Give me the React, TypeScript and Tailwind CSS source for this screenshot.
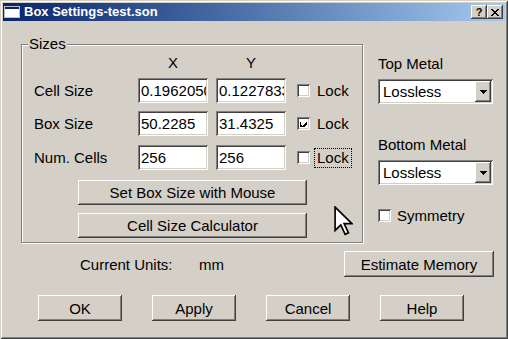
const raised =
  'bg-[#d4d0c8] shadow-[inset_-1px_-1px_#404040,inset_1px_1px_#ffffff,inset_-2px_-2px_#808080,inset_2px_2px_#d4d0c8]'
const sunken =
  'bg-white shadow-[inset_1px_1px_#808080,inset_-1px_-1px_#ffffff,inset_2px_2px_#404040,inset_-2px_-2px_#d4d0c8]'

function Button({ label, className }: { label: string; className: string }) {
  return (
    <div className={`${raised} ${className} flex items-center justify-center text-black`}>
      {label}
    </div>
  )
}

function Field({ value }: { value: string }) {
  return (
    <div className={`${sunken} w-[70px] h-[25px] flex items-center overflow-hidden whitespace-nowrap pl-[3px] pr-[2px]`}>
      <span className="block overflow-hidden">{value}</span>
    </div>
  )
}

function Checkbox({ checked = false }: { checked?: boolean }) {
  return (
    <div className={`${sunken} w-[13px] h-[13px] shrink-0 flex items-center justify-center`}>
      {checked && (
        <svg width="7" height="7" viewBox="0 0 7 7" shapeRendering="crispEdges">
          <path d="M0 2h1v3h1v1h1v-1h1v-1h1v-1h1v-1h1v3h-1v1h-1v1h-1v1h-1v1h-1v-1h-1v-1h-1z" fill="#000" />
        </svg>
      )}
    </div>
  )
}

function Row({
  label,
  x,
  y,
  checked,
  focused,
  className,
}: {
  label: string
  x: string
  y: string
  checked?: boolean
  focused?: boolean
  className: string
}) {
  return (
    <div className={`flex items-center h-[25px] ${className}`}>
      <div className="w-[104px]">{label}</div>
      <Field value={x} />
      <div className="ml-[8px]">
        <Field value={y} />
      </div>
      <div className="ml-[11px]">
        <Checkbox checked={checked} />
      </div>
      <div
        className={`ml-[4px] h-[20px] px-[2px] flex items-center border ${
          focused ? 'border-dotted border-black' : 'border-transparent'
        }`}
      >
        Lock
      </div>
    </div>
  )
}

function Select() {
  return (
    <div className={`${sunken} w-[115px] h-[25px] flex items-center`}>
      <span className="flex-1 pl-[5px]">Lossless</span>
      <div className={`${raised} w-[16px] h-[21px] mr-[2px] flex items-center justify-center`}>
        <svg width="7" height="4" viewBox="0 0 7 4" shapeRendering="crispEdges">
          <path d="M0 0h7v1h-1v1h-1v1h-1v1h-1v-1h-1v-1h-1v-1h-1z" fill="#000" />
        </svg>
      </div>
    </div>
  )
}

export default function App() {
  return (
    <div className="w-[508px] h-[339px] bg-[#d4d0c8] font-['Liberation_Sans',Arial,sans-serif] text-[15px] leading-[17px] text-black">
      <div className="relative w-[508px] h-[339px] p-[3px] shadow-[inset_1px_1px_#d4d0c8,inset_-1px_-1px_#404040,inset_2px_2px_#ffffff,inset_-2px_-2px_#808080]">
        {/* title bar */}
        <div className="h-[18px] flex items-center bg-linear-to-r from-[#0a246a] to-[#a6caf0]">
          <svg width="16" height="16" viewBox="0 0 16 16" className="ml-[1px]" shapeRendering="crispEdges">
            <rect x="0.5" y="2.5" width="15" height="11" fill="#fff" stroke="#c0c0c0" />
            <rect x="1" y="3" width="14" height="2" fill="#0a246a" />
          </svg>
          <span className="ml-[4px] text-white font-bold text-[13px] leading-[16px]">
            Box Settings-test.son
          </span>
          <div className="ml-auto mr-[2px] flex">
            <div className={`${raised} w-[16px] h-[14px] flex items-center justify-center text-[11px] leading-[11px] font-bold`}>
              ?
            </div>
            <div className={`${raised} w-[16px] h-[14px] flex items-center justify-center`}>
              <svg width="8" height="7" viewBox="0 0 8 7" shapeRendering="crispEdges">
                <path
                  d="M0 0h2v1h1v1h2v-1h1v-1h2v1h-1v1h-1v1h-1v1h1v1h1v1h1v1h-2v-1h-1v-1h-2v1h-1v1h-2v-1h1v-1h1v-1h1v-1h-1v-1h-1v-1h-1z"
                  fill="#000"
                />
              </svg>
            </div>
          </div>
        </div>

        {/* main area */}
        <div className="flex">
          <div className="relative ml-[18px] mt-[23px] w-[342px] h-[199px] border border-[#808080] shadow-[inset_1px_1px_#ffffff,1px_1px_#ffffff] pl-[12px]">
            <span className="absolute left-[6px] top-[-10px] bg-[#d4d0c8] px-[1px]">Sizes</span>
            <div className="flex mt-[9px] h-[17px]">
              <div className="w-[104px]" />
              <div className="w-[70px] text-center">X</div>
              <div className="ml-[8px] w-[70px] text-center">Y</div>
            </div>
            <Row label="Cell Size" x="0.1962050" y="0.1227833" className="mt-[7px]" />
            <Row label="Box Size" x="50.2285" y="31.4325" checked className="mt-[8px]" />
            <Row label="Num. Cells" x="256" y="256" focused className="mt-[9px]" />
            <Button label="Set Box Size with Mouse" className="ml-[44px] mt-[10px] w-[229px] h-[25px]" />
            <Button label="Cell Size Calculator" className="ml-[44px] mt-[8px] w-[229px] h-[25px]" />
          </div>

          <div className="ml-[15px] mt-[23px] flex flex-col">
            <div className="mt-[11px]">Top Metal</div>
            <div className="mt-[7px]">
              <Select />
            </div>
            <div className="mt-[32px]">Bottom Metal</div>
            <div className="mt-[7px]">
              <Select />
            </div>
            <div className="mt-[22px] flex items-center">
              <Checkbox />
              <span className="ml-[6px]">Symmetry</span>
            </div>
          </div>
        </div>

        {/* units row */}
        <div className="flex items-center mt-[8px] h-[26px]">
          <span className="ml-[77px] w-[119px]">Current Units:</span>
          <span>mm</span>
          <Button label="Estimate Memory" className="ml-auto mr-[11px] w-[150px] h-[26px]" />
        </div>

        {/* dialog buttons */}
        <div className="flex mt-[18px] ml-[35px] gap-[30px]">
          <Button label="OK" className="w-[84px] h-[26px]" />
          <Button label="Apply" className="w-[84px] h-[26px]" />
          <Button label="Cancel" className="w-[84px] h-[26px]" />
          <Button label="Help" className="w-[84px] h-[26px]" />
        </div>

        {/* mouse pointer */}
        <svg
          className="absolute left-[334px] top-[206px]"
          width="19"
          height="30"
          viewBox="0 0 12.6 20"
        >
          <path
            d="M0.7 0.7V16.3L4.5 12.6L7.4 18.9L9.6 17.9L6.7 11.7H11.9Z"
            fill="#fff"
            stroke="#000"
            strokeWidth="1.1"
            strokeLinejoin="miter"
          />
        </svg>
      </div>
    </div>
  )
}
